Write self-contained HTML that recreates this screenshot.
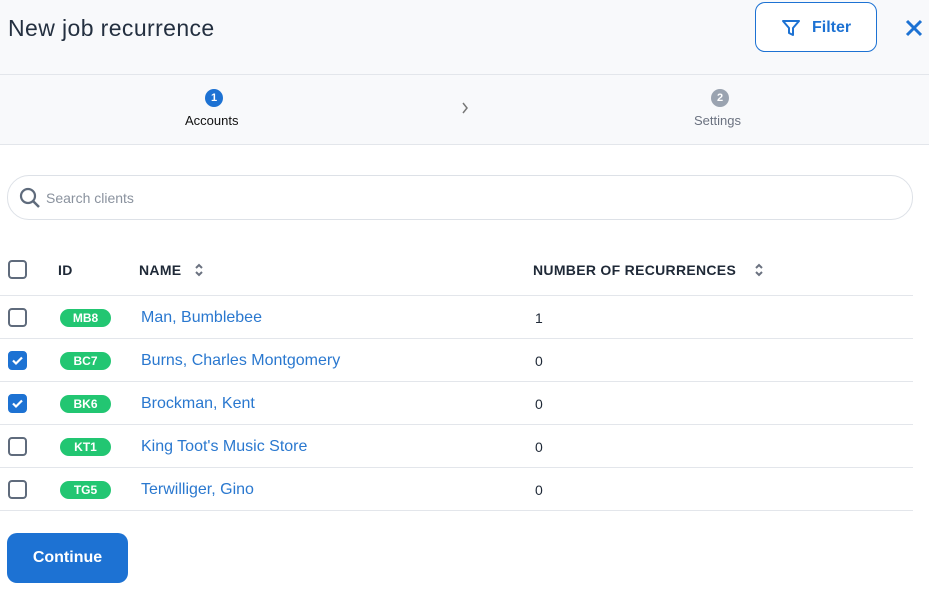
<!DOCTYPE html>
<html><head><style>
*{box-sizing:border-box;margin:0;padding:0}
body{width:929px;height:589px;background:#fff;font-family:"Liberation Sans",sans-serif;position:relative;overflow:hidden;color:#1f2937}
.hdr{position:absolute;left:0;top:0;width:929px;height:75px;background:#f8f9fb;border-bottom:1px solid #e3e6eb}
.title{position:absolute;left:8px;top:15px;font-size:23px;color:#243040;letter-spacing:.4px}
.filter{position:absolute;left:755px;top:2px;width:122px;height:50px;border:1px solid #1d72d3;border-radius:10px;background:#fff;color:#1d72d3;font-size:16px;font-weight:bold}
.filter span{position:absolute;left:56px;top:16px}
.steps{position:absolute;left:0;top:75px;width:929px;height:70px;background:#f8f9fb;border-bottom:1px solid #e3e6eb}
.dot{position:absolute;width:18px;height:18px;border-radius:50%;color:#fff;font-size:11px;font-weight:bold;text-align:center;line-height:18px}
.lbl{position:absolute;font-size:13px}
.search{position:absolute;left:7px;top:175px;width:906px;height:45px;border:1px solid #dde1e7;border-radius:22px}
.search span{position:absolute;left:38px;top:14px;font-size:14px;color:#8a929e}
.cb{position:absolute;left:8px;width:19px;height:19px;border:2px solid #5f6b7c;border-radius:4px;background:#fff}
.cb.on{background:#1d72d3;border-color:#1d72d3}
.row{position:absolute;left:0;width:913px;border-bottom:1px solid #e3e6eb;height:43px}
.th{position:absolute;top:262px;font-size:14px;font-weight:bold;color:#1f2937;letter-spacing:.3px}
.srt{position:absolute;top:262px}
.pill{position:absolute;left:60px;width:51px;height:18px;border-radius:9px;background:#22c672;color:#fff;font-size:12px;font-weight:bold;text-align:center;line-height:18px}
.nm{position:absolute;left:141px;font-size:16px;color:#2a78cf}
.n{position:absolute;left:535px;font-size:14px;color:#1f2937}
.btn{position:absolute;left:7px;top:533px;width:121px;height:50px;border-radius:10px;background:#1d72d3;color:#fff;font-size:16px;font-weight:bold;text-align:center;line-height:50px}
</style></head><body>
<div class="hdr">
<div class="title">New job recurrence</div>
<div class="filter"><svg style="position:absolute;left:25px;top:15px" width="20" height="20" viewBox="0 0 20 20"><path d="M2 3h16l-6 7v7l-4-2v-5z" fill="none" stroke="#1d72d3" stroke-width="2" stroke-linejoin="round"/></svg><span>Filter</span></div>
<svg style="position:absolute;left:905px;top:19px" width="18" height="18" viewBox="0 0 18 18"><path d="M2 2L16 16M16 2L2 16" stroke="#1d72d3" stroke-width="3"/></svg>
</div>
<div class="steps">
<div class="dot" style="left:205px;top:14px;background:#1d72d3">1</div>
<div class="lbl" style="left:185px;top:38px;color:#111">Accounts</div>
<svg style="position:absolute;left:461px;top:27px" width="8" height="12" viewBox="0 0 8 12"><path d="M2 1l4 5-4 5" fill="none" stroke="#777" stroke-width="1.5"/></svg>
<div class="dot" style="left:711px;top:14px;background:#9aa3b0">2</div>
<div class="lbl" style="left:694px;top:38px;color:#6b7280">Settings</div>
</div>
<div class="search"><svg style="position:absolute;left:11px;top:11px" width="22" height="22" viewBox="0 0 22 22"><circle cx="9" cy="9" r="7" fill="none" stroke="#5f6b7c" stroke-width="2.2"/><path d="M14 14l6 6" stroke="#5f6b7c" stroke-width="2.5"/></svg><span>Search clients</span></div>
<div class="row" style="top:253px"></div>
<div class="cb" style="top:260px"></div>
<div class="th" style="left:58px">ID</div>
<div class="th" style="left:139px">NAME</div>
<svg class="srt" style="left:194px" width="10" height="16" viewBox="0 0 10 16"><path d="M2 6l3-3 3 3M2 10l3 3 3-3" fill="none" stroke="#6b7280" stroke-width="2"/></svg>
<div class="th" style="left:533px">NUMBER OF RECURRENCES</div>
<svg class="srt" style="left:754px" width="10" height="16" viewBox="0 0 10 16"><path d="M2 6l3-3 3 3M2 10l3 3 3-3" fill="none" stroke="#6b7280" stroke-width="2"/></svg>

<div class="row" style="top:296px"></div><div class="cb" style="top:308px"></div><div class="pill" style="top:309px">MB8</div><div class="nm" style="top:309px">Man, Bumblebee</div><div class="n" style="top:310px">1</div>
<div class="row" style="top:339px"></div><div class="cb on" style="top:351px"><svg width="15" height="15" viewBox="0 0 15 15"><path d="M3 7.5l3 3 6-6" fill="none" stroke="#fff" stroke-width="2.2"/></svg></div><div class="pill" style="top:352px">BC7</div><div class="nm" style="top:352px">Burns, Charles Montgomery</div><div class="n" style="top:353px">0</div>
<div class="row" style="top:382px"></div><div class="cb on" style="top:394px"><svg width="15" height="15" viewBox="0 0 15 15"><path d="M3 7.5l3 3 6-6" fill="none" stroke="#fff" stroke-width="2.2"/></svg></div><div class="pill" style="top:395px">BK6</div><div class="nm" style="top:395px">Brockman, Kent</div><div class="n" style="top:396px">0</div>
<div class="row" style="top:425px"></div><div class="cb" style="top:437px"></div><div class="pill" style="top:438px">KT1</div><div class="nm" style="top:438px">King Toot's Music Store</div><div class="n" style="top:439px">0</div>
<div class="row" style="top:468px"></div><div class="cb" style="top:480px"></div><div class="pill" style="top:481px">TG5</div><div class="nm" style="top:481px">Terwilliger, Gino</div><div class="n" style="top:482px">0</div>
<div class="btn">Continue</div>
</body></html>
